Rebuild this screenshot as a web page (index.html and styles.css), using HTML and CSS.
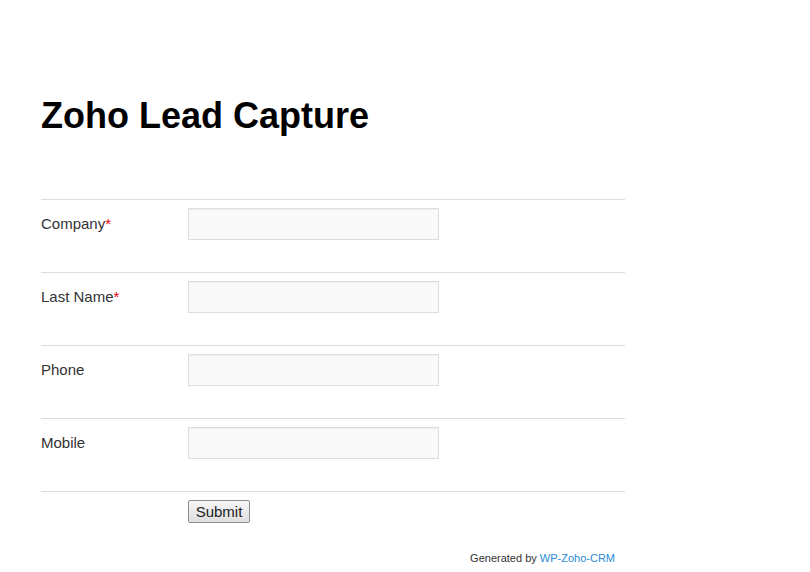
FILE: index.html
```html
<!DOCTYPE html>
<html>
<head>
<meta charset="utf-8">
<link rel="stylesheet" href="styles.css">
</head>
<body>
<div class="page">
  <h1 class="title">Zoho Lead Capture</h1>
  <form class="form">
    <div class="row">
      <label class="label">Company<span class="req">*</span></label>
      <input class="field" type="text">
    </div>
    <div class="row">
      <label class="label">Last Name<span class="req">*</span></label>
      <input class="field" type="text">
    </div>
    <div class="row">
      <label class="label">Phone</label>
      <input class="field" type="text">
    </div>
    <div class="row">
      <label class="label">Mobile</label>
      <input class="field" type="text">
    </div>
    <div class="row row-submit">
      <span class="label"></span>
      <button class="submit" type="button">Submit</button>
    </div>
  </form>
  <div class="credit">Generated by <a class="credit-link" href="#">WP-Zoho-CRM</a></div>
</div>
</body>
</html>
```
FILE: styles.css
```css
html, body {
  margin: 0;
  padding: 0;
  background: #fff;
}
body {
  font-family: "Liberation Sans", Arial, sans-serif;
  color: #333;
}
.page {
  width: 584px;
  padding: 0 0 0 41px;
}
.title {
  margin: 0;
  padding-top: 95px;
  font-size: 36px;
  line-height: 42px;
  font-weight: bold;
  color: #000;
  height: 104px;
}
.form {
  margin: 0;
}
.row {
  display: flex;
  align-items: center;
  border-top: 1px solid #dcdcdc;
  padding: 8px 0 32px;
}
.label {
  width: 147px;
  font-size: 15px;
  color: #333;
  margin-bottom: 2px;
}
.req {
  color: #e00;
}
.field {
  box-sizing: border-box;
  width: 251px;
  height: 32px;
  margin: 0;
  border: 1px solid #ddd;
  background: #f9f9f9;
  box-shadow: inset 0 1px 1px rgba(0,0,0,0.04);
  outline: none;
}
.row-submit {
  border-top: 1px solid #dcdcdc;
  padding: 8px 0 0;
}
.submit {
  box-sizing: border-box;
  height: 23px;
  width: 62px;
  padding: 0;
  margin: 0;
  font-family: "Liberation Sans", Arial, sans-serif;
  font-size: 15px;
  color: #222;
  border: 1px solid #8f8f8f;
  border-radius: 2px;
  background: linear-gradient(#f6f6f6, #dedede);
}
.credit {
  text-align: right;
  font-size: 11px;
  color: #333;
  margin-top: 29px;
  padding-right: 10px;
}
.credit-link {
  color: #2a8ad4;
  text-decoration: none;
}
```
